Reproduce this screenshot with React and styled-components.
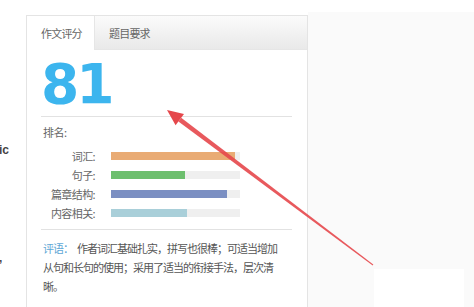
import styled, { createGlobalStyle } from 'styled-components';

const GlobalStyle = createGlobalStyle`
  html, body {
    margin: 0;
    padding: 0;
    background: #fff;
    font-family: "Noto Sans CJK SC", "Liberation Sans", sans-serif;
  }
`;

const scores = [
  { label: '词汇:', value: 96, color: '#e9ab74' },
  { label: '句子:', value: 57, color: '#6dbf6e' },
  { label: '篇章结构:', value: 90, color: '#7b8fc2' },
  { label: '内容相关:', value: 59, color: '#a9cfd9' },
];

const App = () => (
  <>
    <GlobalStyle />
    <Page>
      <LeftStrip>
        <Fragment top={142}>ic</Fragment>
        <Fragment top={99}>’</Fragment>
      </LeftStrip>
      <Panel>
        <Tabs>
          <Tab active>作文评分</Tab>
          <Tab>题目要求</Tab>
        </Tabs>
        <Body>
          <Score>81</Score>
          <Divider />
          <SectionTitle>排名:</SectionTitle>
          <Rows>
            {scores.map((s) => (
              <Row key={s.label}>
                <Label>{s.label}</Label>
                <Track>
                  <Fill color={s.color} style={{ width: `${s.value}%` }} />
                </Track>
              </Row>
            ))}
          </Rows>
          <Divider />
          <Comment>
            <CommentKey>评语：</CommentKey>
            作者词汇基础扎实，拼写也很棒；可适当增加从句和长句的使用；采用了适当的衔接手法，层次清晰。
          </Comment>
        </Body>
      </Panel>
      <RightArea>
        <Stamp />
      </RightArea>
      <Arrow viewBox="0 0 474 307">
        <polygon points="167,110 184,114 175.6,125.2" fill="#e5474b" />
        <polygon
          points="178.4,121.4 181.2,117.8 373.3,264.6 372.7,265.4"
          fill="#e5474b"
          opacity="0.9"
        />
      </Arrow>
    </Page>
  </>
);

export default App;

const Page = styled.div`
  position: relative;
  display: flex;
  width: 474px;
  height: 307px;
  overflow: hidden;
`;

const LeftStrip = styled.div`
  width: 26px;
  flex-shrink: 0;
  display: flex;
  flex-direction: column;
`;

const Fragment = styled.div`
  margin-top: ${(p) => p.top}px;
  font-family: "Liberation Sans", sans-serif;
  font-size: 12px;
  font-weight: bold;
  color: #444;
  line-height: 16px;
  margin-left: -1px;
`;

const Panel = styled.div`
  width: 280px;
  flex-shrink: 0;
  margin-top: 15px;
  border: 1px solid #e4e4e4;
  border-bottom: none;
  background: #fff;
`;

const Tabs = styled.div`
  display: flex;
  height: 33px;
  background: linear-gradient(#fbfbfb, #e9e9e9);
  border-bottom: 1px solid #e6e6e6;
`;

const Tab = styled.div`
  width: ${(p) => (p.active ? '68px' : 'auto')};
  padding-left: 14px;
  box-sizing: border-box;
  display: flex;
  align-items: center;
  font-size: 11px;
  letter-spacing: -0.8px;
  color: #666;
  background: ${(p) => (p.active ? '#fff' : 'transparent')};
  margin-bottom: ${(p) => (p.active ? '-1px' : '0')};
  border-right: ${(p) => (p.active ? '1px solid #e6e6e6' : 'none')};
`;

const Body = styled.div`
  padding: 0 15px 0 14px;
`;

const Score = styled.div`
  font-family: "DejaVu Sans", sans-serif;
  font-weight: bold;
  font-size: 55px;
  line-height: 56px;
  letter-spacing: -3px;
  color: #3cb5ee;
  padding: 6px 0 0 0;
`;

const Divider = styled.div`
  height: 1px;
  background: #e2e2e2;
  margin-top: 4px;
`;

const SectionTitle = styled.div`
  font-size: 11px;
  letter-spacing: -0.5px;
  color: #666;
  line-height: 16px;
  margin-top: 7px;
  padding-left: 2px;
`;

const Rows = styled.div`
  display: flex;
  flex-direction: column;
  margin-top: 6px;
  margin-bottom: 7px;
`;

const Row = styled.div`
  display: flex;
  align-items: center;
  height: 19px;
`;

const Label = styled.div`
  width: 54px;
  text-align: right;
  font-size: 11px;
  letter-spacing: -0.6px;
  color: #666;
`;

const Track = styled.div`
  margin-left: 16px;
  width: 129px;
  height: 8px;
  background: #efefef;
`;

const Fill = styled.div`
  height: 100%;
  background: ${(p) => p.color};
`;

const Comment = styled.div`
  margin-top: 9px;
  padding-left: 2px;
  font-size: 11px;
  letter-spacing: -1px;
  line-height: 19px;
  color: #555;
  width: 237px;
`;

const CommentKey = styled.span`
  display: inline-block;
  color: #5fa8d6;
  margin-right: 4px;
`;

const RightArea = styled.div`
  flex: 1;
  margin-top: 12px;
  background: #fafafa;
  display: flex;
  align-items: flex-end;
  justify-content: flex-end;
`;

const Stamp = styled.div`
  width: 90px;
  height: 38px;
  margin-right: 10px;
  background: #fff;
`;

const Arrow = styled.svg`
  position: absolute;
  left: 0;
  top: 0;
  width: 474px;
  height: 307px;
  pointer-events: none;
`;
